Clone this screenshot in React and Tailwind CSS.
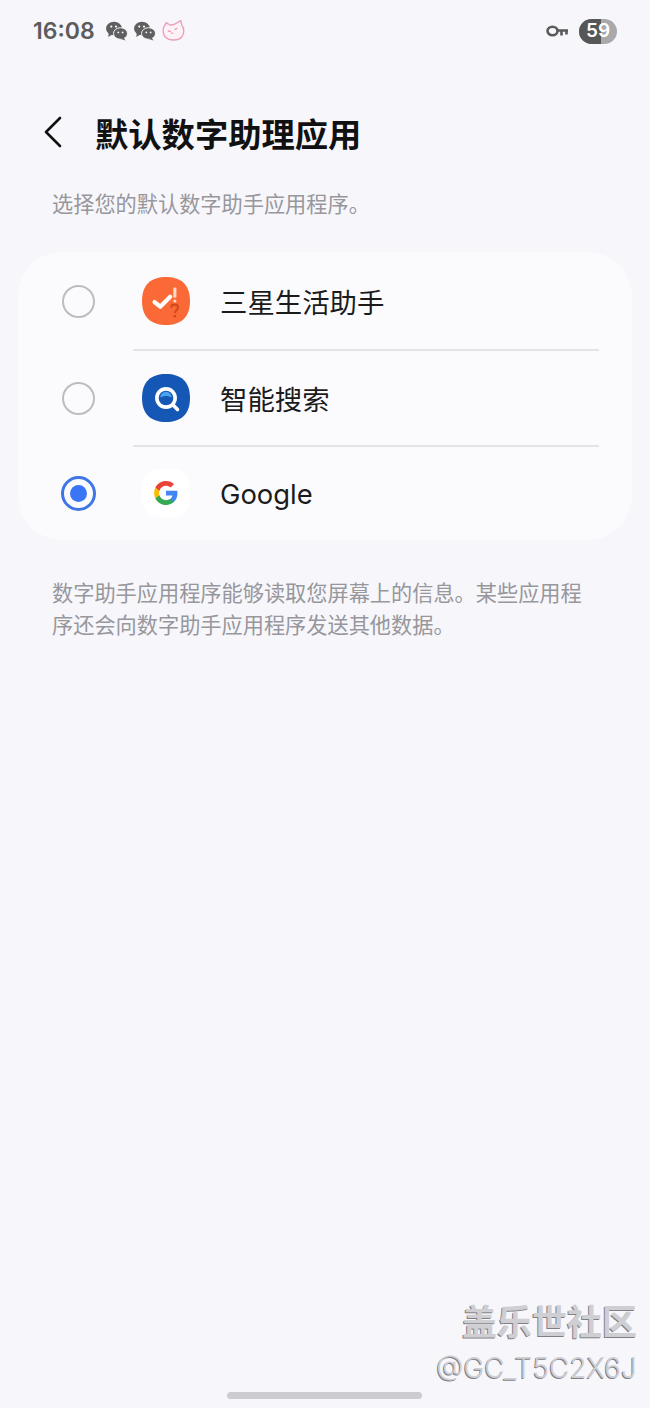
import React from 'react';

const cjk = { fontFamily: '"Noto Sans CJK SC", "Noto Sans", sans-serif' };

const WeChat = () => (
  <svg width="23" height="20" viewBox="0 0 23 20" fill="#5f5f5f">
    <ellipse cx="9" cy="7.5" rx="8" ry="6.8" />
    <path d="M4 11.5 3.2 16 8 13z" />
    <ellipse cx="15.5" cy="12.5" rx="7" ry="5.8" stroke="#f6f6fb" strokeWidth="1" />
    <path d="M18.5 16.5 20.5 19.5 15.8 18z" />
    <circle cx="6.3" cy="5.6" r="1.1" fill="#f6f6fb" />
    <circle cx="11" cy="5.6" r="1.1" fill="#f6f6fb" />
    <circle cx="13.3" cy="11.4" r="0.9" fill="#f6f6fb" />
    <circle cx="17.6" cy="11.4" r="0.9" fill="#f6f6fb" />
  </svg>
);

const Cat = () => (
  <svg width="25" height="24" viewBox="0 0 24 23" fill="none" stroke="#ef9dbb" strokeWidth="1.3" strokeLinejoin="round" strokeLinecap="round">
    <path d="M3 7 5 3.500 9 6 13 5 19 1.500 20 6C22.500 9 22.500 14 20 17 17 21 8 21 5 18 1.500 15 1.500 10 3 7z" fill="#fdf3f7" />
    <path d="M7 11.500l2 .5M13.500 10l1.800-1" />
    <path d="M10 13.500h1.500" />
  </svg>
);

const Key = () => (
  <svg width="23" height="15" viewBox="0 0 23 15" fill="none" stroke="#5a5a5a" strokeWidth="2.600">
    <ellipse cx="6.500" cy="7" rx="5" ry="4.300" />
    <path d="M11 6.500h11M15.500 6.500v5M20.500 6.500v4" />
  </svg>
);

const Radio = ({ on }) =>
  on ? (
    <div className="w-[35px] h-[35px] rounded-full border-[3.5px] border-[#3f76e4] flex items-center justify-center">
      <div className="w-[17px] h-[17px] rounded-full bg-[#3a75f5]" />
    </div>
  ) : (
    <div className="w-[33px] h-[33px] rounded-full border-[2.500px] border-[#bcbcc2]" />
  );

const LifeIcon = () => (
  <svg width="48" height="48" viewBox="1 1 46 46">
    <path d="M24 1C38 1 47 8 47 24S38 47 24 47 1 40 1 24 10 1 24 1z" fill="#fb6a36" />
    <path d="M13 25l5.500 4.500L28 20" fill="none" stroke="#fff" strokeWidth="4" strokeLinecap="round" strokeLinejoin="round" />
    <rect x="31" y="11" width="3" height="10" rx="1.200" fill="#ffd9c8" />
    <circle cx="32.500" cy="24" r="1.500" fill="#ffd9c8" />
    <path d="M29 30.500c0-4 6.500-4 6.500 0 0 2.500-3 2.500-3 5" fill="none" stroke="#d24a1c" strokeWidth="2" />
    <circle cx="32.500" cy="38.500" r="1.300" fill="#d24a1c" />
  </svg>
);

const SearchIcon = () => (
  <svg width="48" height="48" viewBox="1 1 46 46">
    <path d="M24 1C38 1 47 8 47 24S38 47 24 47 1 40 1 24 10 1 24 1z" fill="#1557b5" />
    <circle cx="24" cy="24" r="10.500" fill="#fff" />
    <circle cx="24" cy="24" r="7" fill="#1557b5" />
    <path d="M18.500 23.500a5.500 5.500 0 0 1 11 0c-3-2-8-2-11 0z" fill="#4aa3f0" />
    <path d="M31 31l4 4" stroke="#fff" strokeWidth="3.500" strokeLinecap="round" />
  </svg>
);

const GoogleIcon = () => (
  <div className="w-[48px] h-[48px] rounded-[17px] bg-white flex items-center justify-center">
    <svg width="26" height="26" viewBox="0 0 48 48">
      <path fill="#4285F4" d="M45.100 24.500c0-1.600-.1-3.100-.4-4.500H24v8.600h11.800c-.5 2.800-2 5.100-4.400 6.700v5.500h7.100c4.200-3.800 6.600-9.500 6.600-16.300z" />
      <path fill="#34A853" d="M24 46c5.900 0 10.900-2 14.500-5.300l-7.100-5.500c-2 1.300-4.500 2.100-7.400 2.100-5.700 0-10.500-3.800-12.200-9H4.500v5.700C8.100 41.100 15.500 46 24 46z" />
      <path fill="#FBBC05" d="M11.800 28.300c-.4-1.300-.7-2.800-.7-4.300s.3-3 .7-4.300V14H4.500C3 17 2.100 20.400 2.100 24s.9 7 2.400 10l7.300-5.700z" />
      <path fill="#EA4335" d="M24 10.700c3.200 0 6.100 1.100 8.400 3.300l6.300-6.300C34.900 4.100 29.900 2 24 2 15.500 2 8.100 6.900 4.500 14l7.300 5.700c1.700-5.200 6.500-9 12.200-9z" />
    </svg>
  </div>
);

const Row = ({ icon, label, on, latin, divider, height }) => (
  <div className={`${height} flex relative`}>
    <div className="w-[115px] flex items-center justify-center pl-[6px]">
      <Radio on={on} />
    </div>
    <div className="flex-1 flex items-center gap-[30px] pl-[9px]">
      {icon}
      <span
        className={latin ? 'text-[27.4px] text-[#1b1b1c] mt-[4px]' : 'text-[27.4px] text-[#1b1b1c] mt-[2px]'}
        style={latin ? { fontFamily: 'Inter, sans-serif' } : cjk}
      >
        {label}
      </span>
    </div>
    {divider && <div className="absolute left-[115px] right-[33px] -bottom-px h-[2px] bg-[#e4e4e8]" />}
  </div>
);

export default function App() {
  return (
    <div className="relative h-[1408px] overflow-hidden bg-[#f6f6fb]" style={cjk}>
      <div className="h-[62px] flex items-center px-[33px]">
        <span className="text-[23px] font-semibold text-[#5c5c5c] mr-[10px]" style={{ fontFamily: 'Inter, sans-serif' }}>16:08</span>
        <div className="flex items-center gap-[5px]">
          <WeChat />
          <WeChat />
          <Cat />
        </div>
        <div className="ml-auto flex items-center gap-[10px]">
          <Key />
          <div className="relative w-[38px] h-[25px] rounded-full overflow-hidden flex bg-[#a9a9ab]">
            <div className="w-[22px] bg-[#565656]" />
            <span className="absolute inset-0 flex items-center justify-center text-[19px] font-semibold text-white" style={{ fontFamily: 'Inter, sans-serif' }}>59</span>
          </div>
        </div>
      </div>

      <div className="flex items-center h-[50px] mt-[48px] pl-[44px]">
        <svg className="mb-[6px]" width="18" height="32" viewBox="0 0 18 32" fill="none" stroke="#111" strokeWidth="2.600" strokeLinecap="round" strokeLinejoin="round">
          <path d="M16 2 2 16l14 14" />
        </svg>
        <h1 className="ml-[33px] mb-[4px] text-[33.3px] font-bold text-[#111]">默认数字助理应用</h1>
      </div>

      <p className="mt-[27px] pl-[52px] text-[21.2px] leading-[32px] text-[#97979c]">选择您的默认数字助手应用程序。</p>

      <div className="mx-[18px] mt-[33px] rounded-[44px] bg-[#fbfbfe]">
        <Row height="h-[98px]" icon={<LifeIcon />} label="三星生活助手" divider />
        <Row height="h-[96px]" icon={<SearchIcon />} label="智能搜索" divider />
        <Row height="h-[94px]" icon={<GoogleIcon />} label="Google" on latin />
      </div>

      <p className="mt-[36px] px-[52px] text-[21.2px] leading-[32px] text-[#97979c]">
        数字助手应用程序能够读取您屏幕上的信息。某些应用程序还会向数字助手应用程序发送其他数据。
      </p>

      <div className="absolute right-[13px] bottom-[22px] text-right text-[#cfcfd3] [text-shadow:-1px_1px_0_#808084]">
        <div className="text-[35px] leading-[44px] font-bold mb-[8px]">盖乐世社区</div>
        <div className="text-[28px] leading-[36px] font-light" style={{ fontFamily: 'Inter, sans-serif' }}>@GC_T5C2X6J</div>
      </div>

      <div className="absolute left-[227px] bottom-[9px] w-[195px] h-[7px] rounded-full bg-[#ccccd1]" />
    </div>
  );
}
